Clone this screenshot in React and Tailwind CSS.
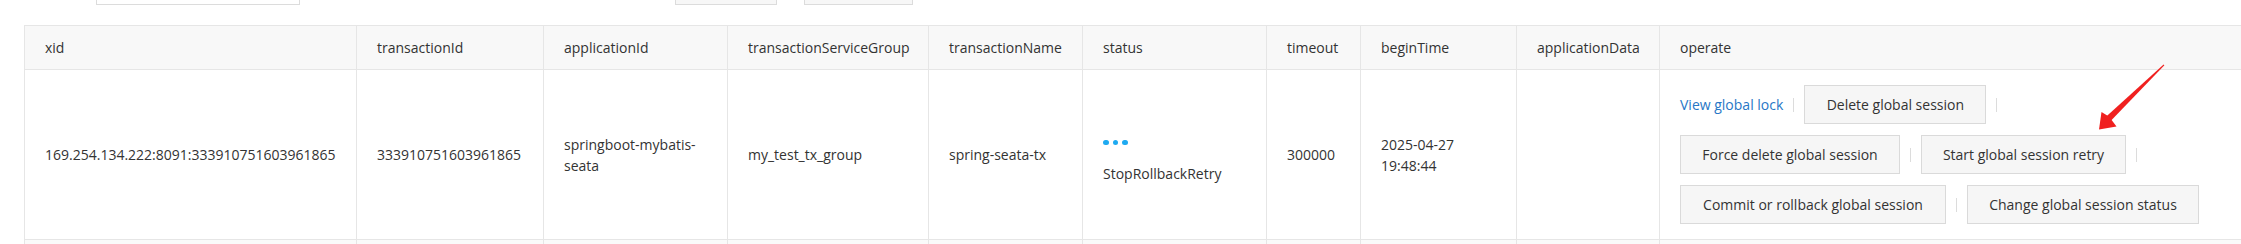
import React from 'react';

// --- Table data ---
const columns = [
    { key: 'xid', label: 'xid', width: 'w-[332px]' },
    { key: 'transactionId', label: 'transactionId', width: 'w-[187px]' },
    { key: 'applicationId', label: 'applicationId', width: 'w-[184px]' },
    { key: 'transactionServiceGroup', label: 'transactionServiceGroup', width: 'w-[201px]' },
    { key: 'transactionName', label: 'transactionName', width: 'w-[154px]' },
    { key: 'status', label: 'status', width: 'w-[184px]' },
    { key: 'timeout', label: 'timeout', width: 'w-[94px]' },
    { key: 'beginTime', label: 'beginTime', width: 'w-[156px]' },
    { key: 'applicationData', label: 'applicationData', width: 'w-[143px]' },
    { key: 'operate', label: 'operate', width: 'w-[582px]' },
];

const row = {
    xid: '169.254.134.222:8091:333910751603961865',
    transactionId: '333910751603961865',
    applicationId: 'springboot-mybatis-seata',
    transactionServiceGroup: 'my_test_tx_group',
    transactionName: 'spring-seata-tx',
    status: 'StopRollbackRetry',
    timeout: '300000',
    beginTime: '2025-04-27 19:48:44',
    applicationData: '',
};

const operations = [
    { label: 'View global lock', link: true },
    { label: 'Delete global session', width: 'w-[182px]' },
    { label: 'Force delete global session', width: 'w-[220px]' },
    { label: 'Start global session retry', width: 'w-[205px]' },
    { label: 'Commit or rollback global session', width: 'w-[266px]' },
    { label: 'Change global session status', width: 'w-[232px]' },
];

// --- Helper Components ---

const Divider = () => <span className="mx-[10px] w-px h-[14px] bg-[#dcdcdc] shrink-0" />;

const StatusDots = () => (
    <div className="flex items-center gap-[4px] h-[6px] mt-[14px]">
        <span className="w-[5.5px] h-[5.5px] rounded-full bg-[#1eaaf1]" />
        <span className="w-[5.5px] h-[5.5px] rounded-full bg-[#1eaaf1]" />
        <span className="w-[5.5px] h-[5.5px] rounded-full bg-[#1eaaf1]" />
    </div>
);

const OperateCell = () => (
    <div className="flex flex-wrap gap-y-[11px] w-[542px]">
        {operations.map((op, idx) => (
            <div key={idx} className="flex items-center">
                {op.link ? (
                    <span className="text-[#2777c6] leading-[39px] cursor-pointer">{op.label}</span>
                ) : (
                    <button className={`${op.width} h-[39px] bg-[#f6f6f6] border border-[#dadada] text-[#333] text-center whitespace-nowrap`}>
                        {op.label}
                    </button>
                )}
                {idx < operations.length - 1 && <Divider />}
            </div>
        ))}
    </div>
);

// The red annotation arrow pointing at the retry button
const RedArrow = () => (
    <svg className="absolute left-0 top-0 pointer-events-none" width="2241" height="244" viewBox="0 0 2241 244">
        <polygon
            points="2163.6,64.4 2164.4,65.2 2110.4,121.2 2106,116.8"
            fill="#f0201f"
        />
        <polygon points="2099,129.5 2101.5,112 2108,116 2112,120.5 2116.5,126.5" fill="#f0201f" />
    </svg>
);

// --- Main Component ---

const App = () => {
    return (
        <div className="relative w-[2241px] h-[244px] overflow-hidden bg-white text-[14px] text-[#333] font-['Open_Sans','Noto_Sans',Arial,sans-serif]">
            {/* search bar (cut off at the top) */}
            <div className="h-[5px] flex items-end">
                <div className="ml-[96px] w-[204px] h-[32px] shrink-0 bg-white border border-[#dcdcdc]" />
                <div className="ml-[375px] w-[102px] h-[32px] shrink-0 bg-[#f7f7f7] border border-[#dcdcdc]" />
                <div className="ml-[27px] w-[109px] h-[32px] shrink-0 bg-[#f7f7f7] border border-[#dcdcdc]" />
            </div>

            <div className="mt-[20px] ml-[24px]">
                <table className="table-fixed border-collapse w-[2217px]">
                    <colgroup>
                        {columns.map((c) => (
                            <col key={c.key} className={c.width} />
                        ))}
                    </colgroup>
                    <thead>
                        <tr>
                            {columns.map((c) => (
                                <th key={c.key} className="h-[44px] px-5 text-left font-normal bg-[#f8f8f8] border border-[#e6e6e6] whitespace-nowrap">
                                    {c.label}
                                </th>
                            ))}
                        </tr>
                    </thead>
                    <tbody>
                        <tr>
                            {columns.map((c) => (
                                <td key={c.key} className="h-[170px] px-5 align-middle leading-[21px] border border-[#e6e6e6]">
                                    {c.key === 'status' ? (
                                        <div className="flex flex-col">
                                            <StatusDots />
                                            <div className="mt-[17px]">{row.status}</div>
                                        </div>
                                    ) : c.key === 'operate' ? (
                                        <OperateCell />
                                    ) : (
                                        row[c.key]
                                    )}
                                </td>
                            ))}
                        </tr>
                        <tr>
                            {columns.map((c) => (
                                <td key={c.key} className="h-[40px] bg-[#fafafa] border border-[#e6e6e6]" />
                            ))}
                        </tr>
                    </tbody>
                </table>
            </div>

            <RedArrow />
        </div>
    );
};

export default App;
